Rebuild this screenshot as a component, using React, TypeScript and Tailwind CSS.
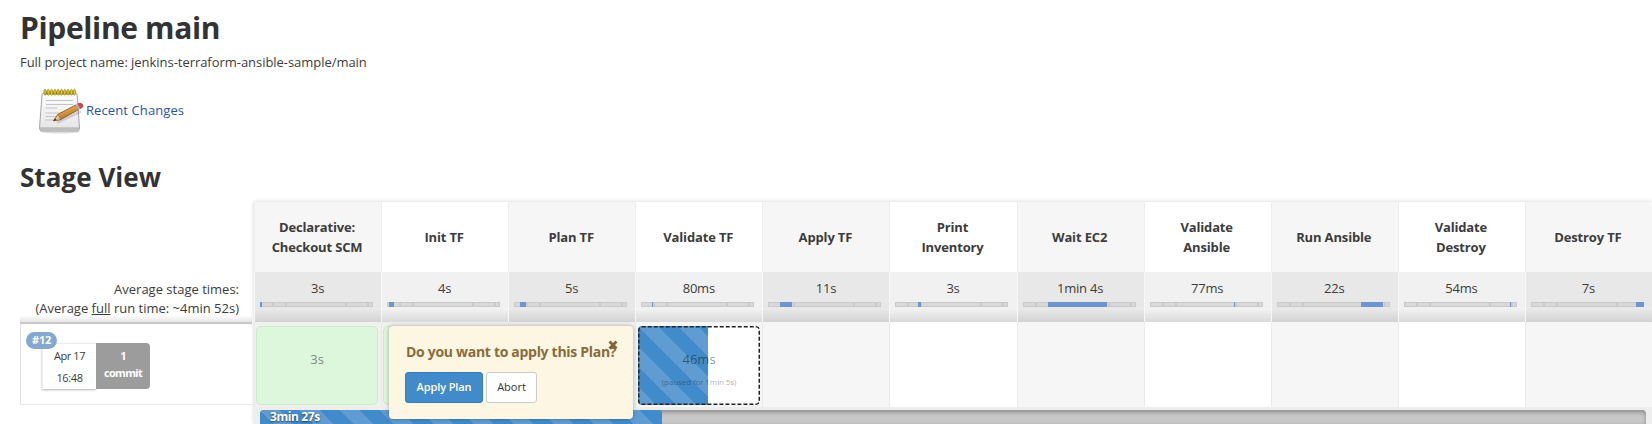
import React from "react";

type Stage = { name: string; time: string; from: number; to: number };

const stages: Stage[] = [
  { name: "Declarative: Checkout SCM", time: "3s", from: 0, to: 2 },
  { name: "Init TF", time: "4s", from: 1.5, to: 6.5 },
  { name: "Plan TF", time: "5s", from: 5.5, to: 12 },
  { name: "Validate TF", time: "80ms", from: 10.5, to: 12 },
  { name: "Apply TF", time: "11s", from: 11.5, to: 23.5 },
  { name: "Print Inventory", time: "3s", from: 23, to: 25.5 },
  { name: "Wait EC2", time: "1min 4s", from: 25.5, to: 84.5 },
  { name: "Validate Ansible", time: "77ms", from: 84, to: 85.5 },
  { name: "Run Ansible", time: "22s", from: 84.5, to: 106.5 },
  { name: "Validate Destroy", time: "54ms", from: 106, to: 107.5 },
  { name: "Destroy TF", time: "7s", from: 105.5, to: 113 },
];

const stripes =
  "bg-[#428bca] bg-[linear-gradient(45deg,rgba(255,255,255,.15)_25%,transparent_25%,transparent_50%,rgba(255,255,255,.15)_50%,rgba(255,255,255,.15)_75%,transparent_75%,transparent)] bg-[length:40px_40px]";

function NotepadIcon() {
  return (
    <svg width="48" height="48" viewBox="0 0 48 48" className="shrink-0">
      <defs>
        <linearGradient id="paper" x1="0" y1="0" x2="0" y2="1">
          <stop offset="0" stopColor="#fdfdfd" />
          <stop offset="1" stopColor="#e4e4e6" />
        </linearGradient>
        <linearGradient id="wood" x1="0" y1="0" x2="0.6" y2="1">
          <stop offset="0" stopColor="#f3cf84" />
          <stop offset="0.5" stopColor="#dc9c42" />
          <stop offset="1" stopColor="#9c6220" />
        </linearGradient>
      </defs>
      <ellipse cx="24" cy="44.5" rx="20" ry="2" fill="#000" opacity=".13" />
      <path d="M7 6.500 H40 Q41 6.500 41.200 8 L43.500 41 Q43.500 44 41 44 H6 Q3.500 44 3.500 41 L6 8 Q6 6.500 7 6.500Z" fill="url(#paper)" stroke="#a5a5a5" strokeWidth="1" />
      <path d="M3.800 40.300 H43.200 V42 Q43 43.800 41 43.800 H6 Q4 43.800 3.800 42Z" fill="#bdbdbd" />
      <path d="M10 13.500H37M10 17.500H37M9.500 21H21M9.500 26H32M9.500 29.500H24M9 33H20" stroke="#c3c4c7" strokeWidth="1.1" />
      <rect x="8" y="4.500" width="31" height="3" fill="#75671a" />
      {[9, 12.3, 15.6, 18.9, 22.2, 25.5, 28.8, 32.1, 35.4, 38.4].map((x) => (
        <ellipse key={x} cx={x} cy="5.200" rx="1.150" ry="3" fill="#dccb3c" stroke="#a48f1c" strokeWidth=".8" />
      ))}
      <path d="M21 35.500 L45 24.500" stroke="#000" strokeWidth="2.500" opacity=".13" />
      <path d="M17.500 33.800 L22 27.300 L39.800 17.900 L42.700 22.600 L24.800 32.500Z" fill="url(#wood)" stroke="#80531f" strokeWidth=".8" />
      <path d="M17.500 33.800 L22 27.300 L24.800 32.500Z" fill="#e7c590" stroke="#80531f" strokeWidth=".5" />
      <path d="M17.300 34 L19 31.300 L20.500 33Z" fill="#333" />
      <path d="M39.500 18 L42 16.700 L44.700 21.400 L42.400 22.800Z" fill="#b5b5b8" />
      <path d="M41.700 16.800 Q45.200 15 46.800 17.700 Q48 20 44.500 21.700Z" fill="#d5474b" stroke="#a83236" strokeWidth=".5" />
    </svg>
  );
}

function MiniBar({ from, to }: { from: number; to: number }) {
  return (
    <div className="relative ml-[5px] h-[5px] w-[113px] border border-[#cacaca] bg-[#d8d8d8]">
      {[11, 24, 84, 106].map((x) => (
        <span key={x} className="absolute top-0 h-[3px] w-[2px] bg-[#cacaca]" style={{ left: x }} />
      ))}
      <span className="absolute -top-px h-[5px] bg-[#6c96d0]" style={{ left: from - 1, width: to - from }} />
    </div>
  );
}

function Popup() {
  return (
    <div className="absolute left-[389px] top-[326px] z-20 h-[92.5px] w-[244px] rounded-[4px] bg-[#fcf6e3] pl-[17px] shadow-[0_0_4px_rgba(0,0,0,.3)]">
      <div className="pt-[16px] text-[14px] font-bold leading-5 tracking-[-0.3px] text-[#8a6d3b]">Do you want to apply this Plan?</div>
      <svg width="10" height="10" viewBox="0 0 10 10" className="absolute left-[219px] top-[14px]">
        <path d="M1.500 1.500 L8.500 8.500 M8.500 1.500 L1.500 8.500" stroke="#816534" strokeWidth="2.800" />
      </svg>
      <div className="-ml-px mt-[10px] flex gap-[3px] text-[11px]">
        <button className="h-[31px] w-[78px] rounded-[3px] border border-[#357ebd] bg-[#428bca] pb-px font-semibold tracking-[-0.1px] text-white">Apply Plan</button>
        <button className="h-[31px] w-[51px] rounded-[3px] border border-[#ccc] bg-white pb-px text-[#333]">Abort</button>
      </div>
    </div>
  );
}

export default function App() {
  return (
    <div className="relative h-[424px] w-[1652px] overflow-hidden bg-white font-['Open_Sans','Noto_Sans',sans-serif] text-[13px] text-[#3c3c3c]">
      <div className="pl-5">
        <h1 className="pt-[8px] text-[30px] font-bold leading-10 tracking-[-0.35px] text-[#333]">Pipeline main</h1>
        <p className="mt-[4px] leading-5 tracking-[-0.04px]">Full project name: jenkins-terraform-ansible-sample/main</p>
        <div className="mt-[15px] flex h-12 items-center pl-[16px]">
          <NotepadIcon />
          <a className="ml-[2px] tracking-[0.1px] text-[#2355ae]">Recent Changes</a>
        </div>
        <h2 className="mt-[24px] h-[43px] text-[26px] font-bold leading-9 tracking-[0.05px] text-[#333]">Stage View</h2>
      </div>

      <div className="flex pl-5">
        <div className="w-[232px] shrink-0">
          <div className="flex h-[120px] flex-col justify-end bg-[linear-gradient(to_top,#e6e6e6,#fff_7px)] pb-[4px] pr-[13px] text-right leading-5">
            <div>Average stage times:</div>
            <div className="leading-[19px]">(Average <u>full</u> run time: ~4min 52s)</div>
          </div>
          <div className="h-[83px] border-b border-l border-t-2 border-b-[#e8e8e8] border-l-[#e0e0e0] border-t-[#c8c8c8] pl-[21px] pt-[19px]">
            <div className="relative flex h-[46px] w-[108px] text-center text-[11px]">
              <span className="absolute -left-[16px] -top-[11px] h-[17px] w-[31px] rounded-full bg-[#83a9d1] font-bold leading-[15px] tracking-[-0.3px] text-white">#12</span>
              <div className="w-[54px] border-l border-t border-[#eee] pt-[1px] leading-[21.5px] tracking-[-0.4px] shadow-[0_1px_2px_rgba(0,0,0,.3)]">
                <div>Apr 17</div>
                <div>16:48</div>
              </div>
              <div className="w-[54px] rounded-r-[4px] bg-[#9c9c9c] pt-[4px] font-bold leading-[17px] tracking-[-0.7px] text-white">
                <div>1</div>
                <div>commit</div>
              </div>
            </div>
          </div>
        </div>

        <div className="ml-[2px] w-[1398px] shrink-0 shadow-[0_0_4px_rgba(0,0,0,.18)]">
          <div className="grid grid-cols-11">
            {stages.map((s, i) => (
              <div key={s.name} className="text-center">
                <div className={`flex h-[70px] items-center justify-center border-l border-[#eee] pl-[14px] pr-[16px] font-bold leading-5 tracking-[-0.15px] ${i % 2 ? "bg-white" : "bg-[#f6f6f6]"}`}>
                  <span className="pb-px">{s.name}</span>
                </div>
                <div className={`h-[50px] border-l border-[#f8f8f8] pt-[6px] ${i % 2 ? "bg-[linear-gradient(#f1f1f1_75%,#d9d9d9)]" : "bg-[linear-gradient(#e8e8e8_75%,#d2d2d2)]"}`}>
                  <div className="mb-[4px] pr-px leading-5 tracking-[-0.2px]">{s.time}</div>
                  <MiniBar from={s.from} to={s.to} />
                </div>
                <div className={`h-[85px] border-l border-[#eaeaea] ${i < 3 ? "bg-[#f0f1ef] pl-[1px] pr-[3px] pt-1" : i === 3 ? "bg-[#f5f5f5] pl-[1.500px] pr-[2px] pt-1" : i % 2 ? "bg-white" : "bg-[#f6f6f6]"}`}>
                  {i < 3 && (
                    <div className="h-[79px] rounded-[5px] border border-[#c9edc6] bg-[#ddf7dc] pt-[20px] leading-6 text-[#7f8e7e]">{i === 0 && s.time}</div>
                  )}
                  {i === 3 && (
                    <div className="relative h-[79px] overflow-hidden rounded-[4px] bg-white">
                      <div className={`h-full w-[70px] ${stripes}`} />
                      <svg width="122" height="79" className="absolute inset-0">
                        <rect x=".75" y=".75" width="120.500" height="77.500" rx="3" fill="none" stroke="#222" strokeWidth="1.500" strokeDasharray="4 2" />
                      </svg>
                      <div className="absolute inset-x-0 top-[23px] leading-5 text-black/45">46ms</div>
                      <div className="absolute inset-x-0 top-[50px] text-[8px] leading-3 tracking-[-0.1px] text-black/35">(paused for 1min 5s)</div>
                    </div>
                  )}
                </div>
              </div>
            ))}
          </div>
          <div className="h-[17px] bg-[#eee] pl-[6px] pr-[6px] pt-[3px]">
            <div className="relative h-[14px] rounded-t-[4px] bg-[#c8c8c8] shadow-[inset_0_2px_4px_rgba(0,0,0,.32)]">
              <div className={`h-full w-[402px] rounded-tl-[4px] pl-[10px] text-[12px] font-bold leading-[14px] tracking-[-0.4px] text-white ${stripes}`}>
                <span className="[text-shadow:0_1px_2px_rgba(0,0,0,.6)]">3min 27s</span>
              </div>
            </div>
          </div>
        </div>
      </div>
      <Popup />
    </div>
  );
}
